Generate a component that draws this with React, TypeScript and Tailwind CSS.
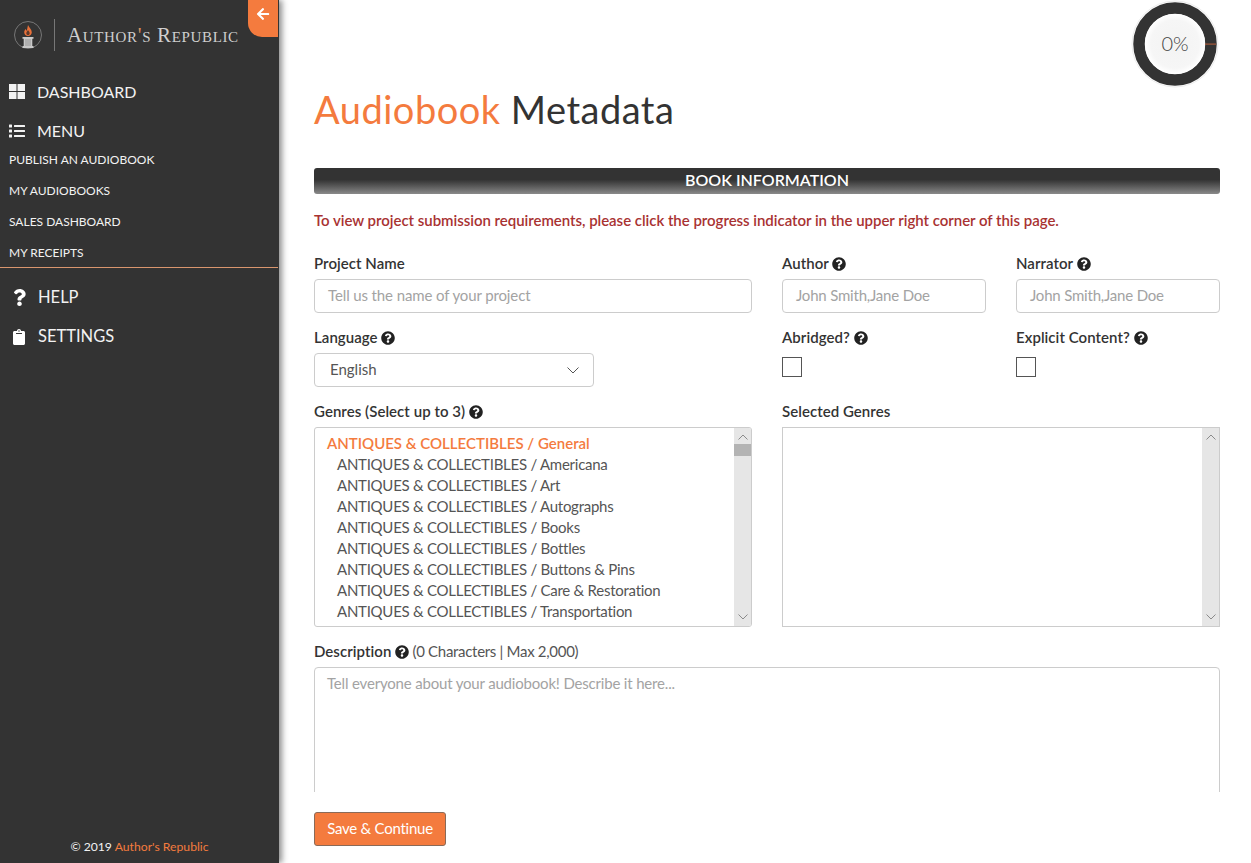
import { FaArrowLeft, FaClipboard, FaList, FaQuestion, FaQuestionCircle } from "react-icons/fa";

const genres = [
  "Americana",
  "Art",
  "Autographs",
  "Books",
  "Bottles",
  "Buttons & Pins",
  "Care & Restoration",
  "Transportation",
];

function Help() {
  return <FaQuestionCircle className="inline-block text-[14px] text-[#222] align-[-2px]" />;
}

function Label({ children }: { children: React.ReactNode }) {
  return <div className="h-[20px] leading-[18px] text-[15px] font-semibold text-[#333] tracking-[0.05px] mb-[5px]">{children}</div>;
}

function Input({ placeholder, tight }: { placeholder: string; tight?: boolean }) {
  return (
    <div className={`h-[34px] rounded-[4px] border border-[#ccc] px-[13px] leading-[30px] text-[15px] text-[#a3a3a3] ${tight ? "tracking-[-0.2px]" : "tracking-[-0.12px]"}`}>{placeholder}</div>
  );
}

function Chevron({ up, className }: { up?: boolean; className?: string }) {
  return (
    <svg width="10" height="6" viewBox="0 0 10 6" className={className} fill="none" stroke="#8a8a8a" strokeWidth="1">
      <path d={up ? "M0.5 5.5L5 1L9.5 5.5" : "M0.5 0.5L5 5L9.5 0.5"} />
    </svg>
  );
}

function Scrollbar({ thumb }: { thumb?: boolean }) {
  return (
    <div className="w-[17px] shrink-0 bg-[#e6e6e6] flex flex-col items-center justify-between pt-[6px] pb-[6px] relative">
      <Chevron up />
      {thumb && <div className="absolute left-0 right-0 top-[16px] h-[12px] bg-[#b3b3b3]" />}
      <Chevron />
    </div>
  );
}

function NavItem({ icon, label, top }: { icon: React.ReactNode; label: string; top?: boolean }) {
  return (
    <div className={`flex items-center h-[39px] text-[#f2f2f2] ${top ? "text-[16px]" : "text-[16.5px]"}`}>
      <span className={`pl-[9px] flex items-center shrink-0 ${top ? "w-[37px]" : "w-[38px]"}`}>{icon}</span>
      <span>{label}</span>
    </div>
  );
}

function SubItem({ label }: { label: string }) {
  return <div className="h-[31px] leading-[31px] pl-[9px] text-[12px] text-[#f2f2f2]">{label}</div>;
}

export default function App() {
  return (
    <div className="flex h-[863px] w-[1251px] overflow-hidden bg-white font-['Lato','Liberation_Sans',sans-serif]">
      <aside className="relative w-[279px] shrink-0 h-full bg-[#333] flex flex-col shadow-[3px_0_6px_rgba(0,0,0,0.45)] z-10">
        <div className="absolute right-[1px] top-0 w-[30px] h-[37px] bg-[#f47b3e] rounded-bl-[14px] flex items-start justify-center pt-[7px]">
          <FaArrowLeft className="text-white text-[14px]" />
        </div>
        <div className="h-[72px] flex items-center pl-[14px] shrink-0">
          <svg width="28" height="28" viewBox="0 0 28 28" className="shrink-0 mt-[-2px]">
            <circle cx="14" cy="14" r="13.5" fill="none" stroke="#777" strokeWidth="1" />
            <path d="M14 4c1 2.500 3.800 4.500 3.800 7.200 0 2.200-1.700 3.800-3.800 3.800s-3.800-1.600-3.800-3.800c0-1.600 1-2.700 1.600-3.300.2 1 .6 1.600 1 1.800C13.300 8 13.500 6 14 4z" fill="#e8703a" />
            <path d="M14 9c.5 1.200 1.700 2 1.700 3.200 0 1-.8 1.800-1.700 1.800s-1.700-.8-1.700-1.800c0-1.200 1.200-2 1.700-3.200z" fill="#5a3a2c" />
            <path d="M8.500 16h11v1.800h-1.200V25h1.200v2H8.500v-2h1.200v-7.200H8.500z" fill="#c9c9c9" />
            <path d="M12 18v7M14 18v7M16 18v7" stroke="#777" strokeWidth=".6" />
          </svg>
          <div className="w-px h-[32px] bg-[#777] mx-[12px] mt-[-2px]" />
          <span className="font-['Liberation_Serif',serif] [font-variant:small-caps] text-[21px] text-[#cfcfcf] tracking-[0.65px] whitespace-nowrap mt-[-1px]">Author<span className="text-[#d8905f]">'</span>s Republic</span>
        </div>
        <NavItem
          top
          label="DASHBOARD"
          icon={
            <svg width="16" height="15" viewBox="0 0 16 15" fill="#f2f2f2">
              <rect x="0" y="0" width="7.500" height="7" />
              <rect x="8.500" y="0" width="7.500" height="7" />
              <rect x="0" y="8" width="7.500" height="7" />
              <rect x="8.500" y="8" width="7.500" height="7" />
            </svg>
          }
        />
        <NavItem top label="MENU" icon={<FaList className="text-[16px] text-[#f2f2f2]" />} />
        <div className="mt-[-6px]">
          <SubItem label="PUBLISH AN AUDIOBOOK" />
          <SubItem label="MY AUDIOBOOKS" />
          <SubItem label="SALES DASHBOARD" />
          <SubItem label="MY RECEIPTS" />
        </div>
        <div className="h-px bg-[#d9966e] mt-[-1px] mb-[10px] mr-[1px]" />
        <NavItem label="HELP" icon={<FaQuestion className="text-[17px] text-white ml-[2px]" />} />
        <NavItem label="SETTINGS" icon={<FaClipboard className="text-[16px] text-white ml-[2px]" />} />
        <div className="mt-auto h-[25px] text-center text-[12.2px] text-[#f2f2f2]">
          © 2019 <span className="text-[#f47b3e]">Author's Republic</span>
        </div>
      </aside>

      <main className="relative flex-1 min-w-0 flex flex-col">
        <svg width="90" height="90" viewBox="0 0 90 90" className="absolute left-[851px] top-0">
          <defs>
            <radialGradient id="ringInner">
              <stop offset="0%" stopColor="#f3f3f3" />
              <stop offset="80%" stopColor="#f6f6f6" />
              <stop offset="100%" stopColor="#ffffff" />
            </radialGradient>
          </defs>
          <circle cx="45" cy="44" r="43" fill="#fff" stroke="#ececec" strokeWidth="1" />
          <circle cx="45" cy="44" r="36" fill="none" stroke="#333" strokeWidth="11.500" />
          <circle cx="45" cy="44" r="30" fill="url(#ringInner)" />
          <rect x="75" y="43.500" width="11" height="1.200" fill="#a5593a" />
          <text x="45" y="51" textAnchor="middle" fontSize="20" fontWeight="300" fill="#444">0%</text>
        </svg>

        <div className="h-[792px] overflow-hidden pl-[35px] pr-[31px]">
          <h1 className="pt-[86px] h-[168px] text-[38px] leading-[46px] tracking-[0.5px] text-[#333]">
            <span className="text-[#f47b3e]">Audiobook</span> Metadata
          </h1>
          <div className="h-[26px] rounded-[3px] bg-gradient-to-b from-[#333] from-45% to-[#8a8a8a] text-center text-white text-[16px] font-semibold leading-[24px]">
            BOOK INFORMATION
          </div>
          <p className="mt-[17px] h-[20px] leading-[18px] text-[15px] font-semibold text-[#a83232] tracking-[-0.03px]">
            To view project submission requirements, please click the progress indicator in the upper right corner of this page.
          </p>

          <div className="mt-[23px] grid grid-cols-[438px_204px_204px] gap-x-[30px]">
            <div className="h-[74px]">
              <Label>Project Name</Label>
              <Input placeholder="Tell us the name of your project" />
            </div>
            <div>
              <Label>Author <Help /></Label>
              <Input tight placeholder="John Smith,Jane Doe" />
            </div>
            <div>
              <Label>Narrator <Help /></Label>
              <Input tight placeholder="John Smith,Jane Doe" />
            </div>

            <div className="h-[74px]">
              <Label>Language <Help /></Label>
              <div className="w-[280px] h-[34px] rounded-[4px] border border-[#ccc] pl-[15px] pr-[14px] flex items-center justify-between text-[15px] text-[#555] leading-[30px]">
                <span className="mt-[-2px]">English</span>
                <svg width="12" height="7" viewBox="0 0 12 7" fill="none" stroke="#555" strokeWidth="1">
                  <path d="M0.500 0.500L6 6L11.500 0.500" />
                </svg>
              </div>
            </div>
            <div>
              <Label>Abridged? <Help /></Label>
              <div className="mt-[9px] w-[20px] h-[20px] border border-[#555] bg-white" />
            </div>
            <div>
              <Label>Explicit Content? <Help /></Label>
              <div className="mt-[9px] w-[20px] h-[20px] border border-[#555] bg-white" />
            </div>

            <div className="h-[240px]">
              <Label>Genres (Select up to 3) <Help /></Label>
              <div className="h-[200px] rounded-[3px] border border-[#ccc] flex overflow-hidden">
                <div className="flex-1 min-w-0 pl-[12px] pt-[5px] text-[15px] leading-[21px] text-[#555] tracking-[-0.26px]">
                  <div className="text-[#f47b3e] font-semibold tracking-[0px]">ANTIQUES & COLLECTIBLES / General</div>
                  {genres.map((g) => (
                    <div key={g} className="pl-[10px]">ANTIQUES & COLLECTIBLES / {g}</div>
                  ))}
                </div>
                <Scrollbar thumb />
              </div>
            </div>
            <div className="col-span-2">
              <Label>Selected Genres</Label>
              <div className="h-[200px] border border-[#ccc] flex">
                <div className="flex-1" />
                <Scrollbar />
              </div>
            </div>
          </div>

          <div className="h-[20px] leading-[18px] text-[15px] text-[#555] mb-[5px] tracking-[-0.3px]">
            <span className="font-semibold text-[#333] tracking-[0.05px]">Description</span> <Help /> (0 Characters | Max 2,000)
          </div>
          <div className="h-[200px] rounded-[4px] border border-[#ccc] px-[12px] pt-[5px] text-[15px] leading-[21px] text-[#a3a3a3] tracking-[-0.18px]">
            Tell everyone about your audiobook! Describe it here...
          </div>
        </div>

        <div className="pl-[35px] pt-[20px]">
          <button className="w-[132px] h-[34px] pb-[2px] rounded-[3px] bg-[#f47b3e] border border-[#8a6a58] text-white text-[15px] tracking-[-0.25px]">Save & Continue</button>
        </div>
      </main>
    </div>
  );
}
